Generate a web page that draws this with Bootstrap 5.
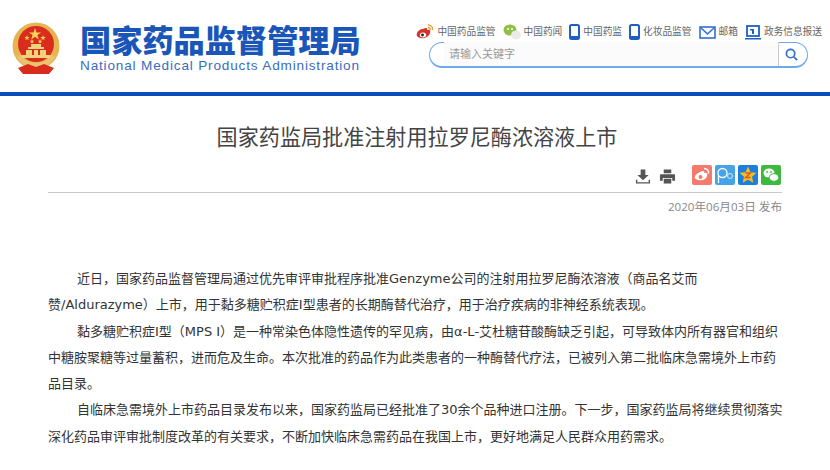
<!DOCTYPE html>
<html lang="zh-CN">
<head>
    <meta charset="UTF-8">
    <title>国家药监局批准注射用拉罗尼酶浓溶液上市</title>
    <link href="https://cdn.jsdelivr.net/npm/bootstrap@5.3.2/dist/css/bootstrap.min.css" rel="stylesheet">
    <style>
        body {
            font-family: "Open Sans", "Noto Sans CJK SC", sans-serif;
            color: #333;
            background: #fff;
            overflow: hidden;
        }
        .site-head {
            height: 96px;
            border-bottom: 4px solid #0d4cbb;
            padding: 22px 8px 0 12px;
        }
        .brand-wrap {
            gap: 20px;
        }
        .brand-cn {
            font-family: "Liberation Sans", "Noto Sans CJK SC", sans-serif;
            font-weight: 900;
            font-size: 31.2px;
            line-height: 34px;
            padding-top: 3px;
            color: #1a56b8;
            white-space: nowrap;
        }
        .brand-en {
            font-family: "Liberation Sans", sans-serif;
            font-size: 13.6px;
            line-height: 16px;
            letter-spacing: .82px;
            margin-top: -1px;
            color: #3b6cc0;
            white-space: nowrap;
        }
        .top-links {
            margin-top: 2px;
            gap: 7px;
        }
        .top-link {
            font-size: 9.7px;
            line-height: 16px;
            color: #666;
            white-space: nowrap;
        }
        .top-item {
            gap: 3px;
        }
        .search-box {
            width: 379px;
            height: 26px;
            margin-top: 2px;
            margin-right: 14px;
            border: 1px solid #6fa8ee;
            border-bottom-width: 2px;
            border-radius: 13px;
            font-size: 11px;
            color: #999;
            padding: 0 0 0 14px;
        }
        .search-field {
            margin-top: -1px;
            padding-left: 5px;
            background: #fbfbfb;
            border-right: 1px solid #ccc;
        }
        .search-btn {
            width: 28px;
            padding-right: 4px;
        }
        .news-title {
            font-family: "Noto Sans CJK SC", sans-serif;
            font-size: 21.1px;
            line-height: 30px;
            font-weight: 400;
            color: #444;
            margin: 25px 0 0;
            padding-left: 4px;
        }
        .tool-row {
            height: 42px;
            border-bottom: 1px solid #c9c9c9;
            padding-bottom: 7px;
        }
        .tool-icons {
            margin-right: 8px;
        }
        .share-icon {
            width: 20px;
            height: 20px;
        }
        .share-list {
            gap: 3px;
            margin-right: 1px;
        }
        .pub-date {
            font-size: 11.6px;
            line-height: 16px;
            color: #888;
            margin-top: 6px;
            margin-bottom: 51px;
        }
        .article-text {
            margin-right: -4px;
        }
        .article-text p {
            font-family: "DejaVu Sans", "Noto Sans CJK SC", sans-serif;
            font-size: 13px;
            line-height: 26.3px;
            text-indent: 29px;
            margin: 0;
            color: #333;
        }
    </style>
</head>
<body>
<header class="site-head d-flex justify-content-between">
    <div class="brand-wrap d-flex">
        <svg width="48" height="52" viewBox="0 0 48 52">
            <circle cx="24" cy="24" r="23.500" fill="#e5b552"/>
            <circle cx="24" cy="22" r="18" fill="#d92c1c"/>
            <path d="M5 34c3 8 11 12 19 12s16-4 19-12l-4-1c-3 5-9 8-15 8s-12-3-15-8z" fill="#e9c272"/>
            <path d="M6 46l10-4 8 3 8-3 10 4-5 6H11z" fill="#d92c1c"/>
            <path d="M10 33h28v3H10zM14 28h20v5H14zM16 25h16v2H16zM19 22h10v3H19z" fill="#f2d27c"/>
            <path d="M20 27h2v6h-2zM26 27h2v6h-2z" fill="#d92c1c"/>
            <path d="M23 6l1.500 4.400h4.600l-3.700 2.700 1.400 4.400-3.800-2.700-3.800 2.700 1.400-4.400-3.700-2.700h4.600z" fill="#f6d25c"/>
            <path d="M15 13l.7 2h2.100l-1.700 1.300.6 2-1.700-1.200-1.700 1.200.6-2-1.700-1.300h2.100z" fill="#f6d25c"/>
            <path d="M31 13l.7 2h2.100l-1.700 1.300.6 2-1.700-1.200-1.700 1.200.6-2-1.700-1.300h2.100z" fill="#f6d25c"/>
            <path d="M20 17l.6 1.700h1.800l-1.400 1.100.5 1.700-1.500-1-1.500 1 .5-1.700-1.400-1.100h1.800z" fill="#f6d25c"/>
            <path d="M28 17l.6 1.700h1.800l-1.400 1.100.5 1.700-1.500-1-1.500 1 .5-1.700-1.400-1.100h1.800z" fill="#f6d25c"/>
        </svg>
        <div>
            <div class="brand-cn">国家药品监督管理局</div>
            <div class="brand-en">National Medical Products Administration</div>
        </div>
    </div>
    <div class="d-flex flex-column align-items-end">
        <div class="top-links d-flex align-items-center top-link">
            <span class="top-item d-flex align-items-center">
                <svg width="18" height="16" viewBox="0 0 18 16"><path d="M7 5c3-2 5-1 4 1 3-1 4 1 3 3-1 4-6 6-10 5-3-1-4-3-3-5 1-2 3-4 6-4z" fill="#d7322c"/><ellipse cx="7" cy="11" rx="3.200" ry="2.500" fill="#fff"/><circle cx="6.500" cy="11" r="1.400" fill="#222"/><path d="M12 1c3 0 5 2 4.500 5M12 3.500c1.500 0 2.500 1 2.300 2.500" fill="none" stroke="#eb9a2c" stroke-width="1.300"/></svg>
                中国药品监管
            </span>
            <span class="top-item d-flex align-items-center">
                <svg width="18" height="16" viewBox="0 0 18 16"><ellipse cx="7" cy="6" rx="6.500" ry="5.500" fill="#8fbf45"/><circle cx="5" cy="5" r="1" fill="#fff"/><circle cx="9" cy="5" r="1" fill="#fff"/><ellipse cx="13" cy="11" rx="5" ry="4.500" fill="#ebebeb"/></svg>
                中国药闻
            </span>
            <span class="top-item d-flex align-items-center">
                <svg width="11" height="16" viewBox="0 0 11 16"><rect x="1" y="1" width="9" height="14" rx="1.500" fill="none" stroke="#1f5fc4" stroke-width="2"/><rect x="1" y="12" width="9" height="3" fill="#1f5fc4"/></svg>
                中国药监
            </span>
            <span class="top-item d-flex align-items-center">
                <svg width="11" height="16" viewBox="0 0 11 16"><rect x="1" y="1" width="9" height="14" rx="1.500" fill="none" stroke="#1f5fc4" stroke-width="2"/><rect x="1" y="12" width="9" height="3" fill="#1f5fc4"/></svg>
                化妆品监管
            </span>
            <span class="top-item d-flex align-items-center">
                <svg width="17" height="13" viewBox="0 0 17 13"><rect x="1" y="1" width="15" height="11" fill="none" stroke="#2f6fd0" stroke-width="1.600"/><path d="M2 2l6.500 6L15 2" fill="none" stroke="#2f6fd0" stroke-width="1.600"/></svg>
                邮箱
            </span>
            <span class="top-item d-flex align-items-center">
                <svg width="16" height="15" viewBox="0 0 16 15"><rect x="2" y="1" width="12" height="10" fill="none" stroke="#1f5fc4" stroke-width="1.800"/><path d="M0 13h16v1.500H0zM7 4h2v5H7zM5 4h3v1.500H5z" fill="#1f5fc4"/></svg>
                政务信息报送
            </span>
        </div>
        <div class="search-box d-flex align-items-stretch">
            <div class="search-field flex-grow-1 d-flex align-items-center">请输入关键字</div>
            <div class="search-btn d-flex align-items-center justify-content-center">
                <svg width="13" height="13" viewBox="0 0 14 14"><circle cx="6" cy="6" r="4.500" fill="none" stroke="#2f6fd0" stroke-width="1.800"/><path d="M9.500 9.500l3.500 3.500" stroke="#2f6fd0" stroke-width="1.800"/></svg>
            </div>
        </div>
    </div>
</header>

<main class="px-5">
    <h1 class="news-title text-center">国家药监局批准注射用拉罗尼酶浓溶液上市</h1>
    <div class="tool-row d-flex justify-content-end align-items-end">
        <div class="tool-icons d-flex align-items-center gap-2">
            <svg width="16" height="17" viewBox="0 0 17 17"><path d="M6 1h5v6h3.500L8.500 12.500 2.500 7H6zM1 12v4h15v-4h-1.500v2.500h-12V12z" fill="#555"/></svg>
            <svg width="17" height="17" viewBox="0 0 18 17"><path d="M5 1h8v4H5zM2 6h14a1 1 0 0 1 1 1v6h-3v-3H4v3H1V7a1 1 0 0 1 1-1zM5 11h8v5H5z" fill="#555"/></svg>
        </div>
        <div class="share-list d-flex ms-2">
            <svg class="share-icon" viewBox="0 0 20 20"><rect width="20" height="20" rx="2" fill="#f47a6c"/><path d="M8 7c3-2 5-1 4 1 3-1 4 1 3 3-1 4-6 5-9 4-3-1-4-2-3-4 1-2 3-3 5-4z" fill="#fff"/><circle cx="8.500" cy="12" r="2" fill="#f47a6c"/><path d="M12 3.500c3 0 5 2 4.500 5" fill="none" stroke="#fff" stroke-width="1.500"/></svg>
            <svg class="share-icon" viewBox="0 0 20 20"><rect width="20" height="20" rx="2" fill="#45a3e8"/><circle cx="7.500" cy="8" r="4.500" fill="none" stroke="#fff" stroke-width="1.300"/><path d="M3.500 10v8" stroke="#fff" stroke-width="1.300"/><circle cx="15" cy="11" r="2.500" fill="none" stroke="#cfe8fb"/></svg>
            <svg class="share-icon" viewBox="0 0 20 20"><rect width="20" height="20" rx="2" fill="#1b7fe0"/><path d="M10 1.500l2.500 5.700 6 .6-4.500 4 1.300 6L10 14.800l-5.300 3 1.300-6-4.500-4 6-.6z" fill="#f6bd1d"/><path d="M7.500 8h5l-5 4.500h5" fill="none" stroke="#d8552a" stroke-width="1.300"/></svg>
            <svg class="share-icon" viewBox="0 0 20 20"><rect width="20" height="20" rx="2" fill="#3fb83f"/><ellipse cx="8" cy="8" rx="5.500" ry="4.500" fill="#fff"/><circle cx="6" cy="7" r=".9" fill="#3fb83f"/><circle cx="10" cy="7" r=".9" fill="#3fb83f"/><ellipse cx="13" cy="12.500" rx="4.800" ry="3.800" fill="#fff" stroke="#3fb83f"/></svg>
        </div>
    </div>
    <div class="pub-date text-end">2020年06月03日 发布</div>
    <div class="article-text">
        <p>近日，国家药品监督管理局通过优先审评审批程序批准Genzyme公司的注射用拉罗尼酶浓溶液（商品名艾而赞/Aldurazyme）上市，用于黏多糖贮积症I型患者的长期酶替代治疗，用于治疗疾病的非神经系统表现。</p>
        <p>黏多糖贮积症I型（MPS I）是一种常染色体隐性遗传的罕见病，由α-L-艾杜糖苷酸酶缺乏引起，可导致体内所有器官和组织中糖胺聚糖等过量蓄积，进而危及生命。本次批准的药品作为此类患者的一种酶替代疗法，已被列入第二批临床急需境外上市药品目录。</p>
        <p>自临床急需境外上市药品目录发布以来，国家药监局已经批准了30余个品种进口注册。下一步，国家药监局将继续贯彻落实深化药品审评审批制度改革的有关要求，不断加快临床急需药品在我国上市，更好地满足人民群众用药需求。</p>
    </div>
</main>
<script src="https://cdn.jsdelivr.net/npm/bootstrap@5.3.2/dist/js/bootstrap.bundle.min.js"></script>
</body>
</html>
